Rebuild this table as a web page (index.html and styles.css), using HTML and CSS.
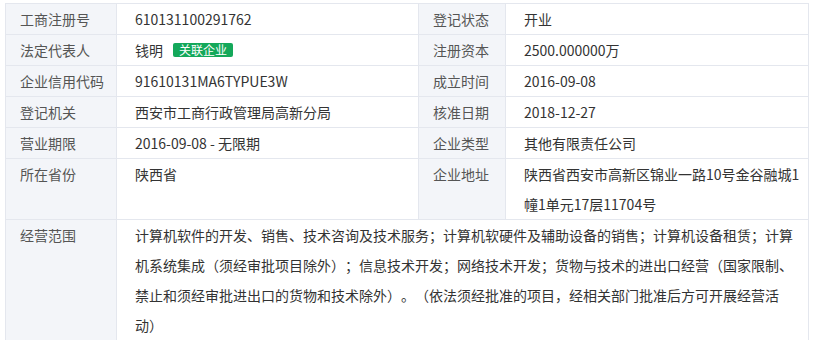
FILE: index.html
```html
<!DOCTYPE html>
<html lang="zh-CN">
<head>
<meta charset="utf-8">
<title>工商信息</title>
<link rel="stylesheet" href="styles.css">
</head>
<body>
<div class="info">
  <div class="lbl">工商注册号</div>
  <div class="val">610131100291762</div>
  <div class="lbl">登记状态</div>
  <div class="val">开业</div>

  <div class="lbl">法定代表人</div>
  <div class="val">钱明<span class="tag">关联企业</span></div>
  <div class="lbl">注册资本</div>
  <div class="val">2500.000000万</div>

  <div class="lbl">企业信用代码</div>
  <div class="val">91610131MA6TYPUE3W</div>
  <div class="lbl">成立时间</div>
  <div class="val">2016-09-08</div>

  <div class="lbl">登记机关</div>
  <div class="val">西安市工商行政管理局高新分局</div>
  <div class="lbl">核准日期</div>
  <div class="val">2018-12-27</div>

  <div class="lbl">营业期限</div>
  <div class="val">2016-09-08 - 无限期</div>
  <div class="lbl">企业类型</div>
  <div class="val">其他有限责任公司</div>

  <div class="lbl">所在省份</div>
  <div class="val">陕西省</div>
  <div class="lbl">企业地址</div>
  <div class="val">陕西省西安市高新区锦业一路10号金谷融城1幢1单元17层11704号</div>

  <div class="lbl">经营范围</div>
  <div class="val wide">计算机软件的开发、销售、技术咨询及技术服务；计算机软硬件及辅助设备的销售；计算机设备租赁；计算机系统集成（须经审批项目除外）；信息技术开发；网络技术开发；货物与技术的进出口经营（国家限制、禁止和须经审批进出口的货物和技术除外）。（依法须经批准的项目，经相关部门批准后方可开展经营活动）</div>
</div>
</body>
</html>
```
FILE: styles.css
```css
html, body {
  margin: 0;
  padding: 0;
  background: #ffffff;
}
body {
  padding: 3px 0 0 5px;
  font-family: "Noto Sans CJK SC", "Noto Sans", sans-serif;
  font-size: 14px;
  color: #333333;
  text-spacing-trim: space-all;
}
.info {
  display: grid;
  grid-template-columns: 110px 301px 86px 302px;
  gap: 1px;
  padding: 1px;
  width: 804px;
  box-sizing: border-box;
  background: #e4e7ee;
}
.lbl, .val {
  line-height: 30px;
  min-height: 30px;
  word-break: break-all;
}
.lbl {
  background: #f3f5f9;
  color: #555555;
  padding-left: 14px;
}
.val {
  background: #ffffff;
  padding: 0 5px 0 18px;
}
.wide {
  grid-column: 2 / 5;
  line-break: strict;
  word-break: normal;
}
.tag {
  display: inline-block;
  margin-left: 10px;
  padding: 0 6px;
  height: 14px;
  line-height: 14px;
  font-size: 12px;
  color: #ffffff;
  background: #14a85a;
  border-radius: 2px;
  vertical-align: 1px;
}
```
